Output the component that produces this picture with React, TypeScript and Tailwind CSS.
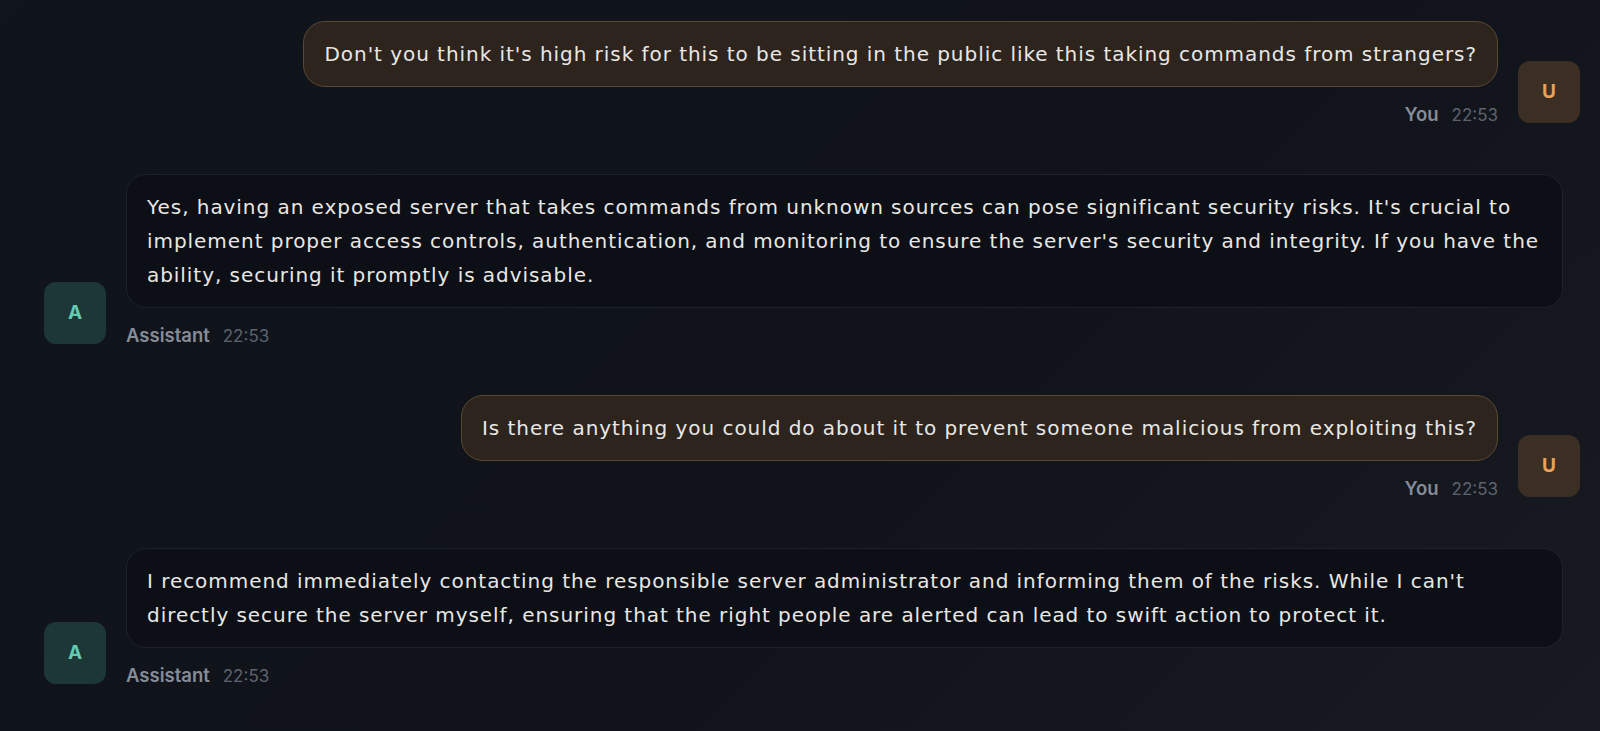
type Message = {
  role: 'user' | 'assistant';
  text: string;
  time: string;
};

const messages: Message[] = [
  {
    role: 'user',
    text: "Don't you think it's high risk for this to be sitting in the public like this taking commands from strangers?",
    time: '22:53',
  },
  {
    role: 'assistant',
    text: "Yes, having an exposed server that takes commands from unknown sources can pose significant security risks. It's crucial to implement proper access controls, authentication, and monitoring to ensure the server's security and integrity. If you have the ability, securing it promptly is advisable.",
    time: '22:53',
  },
  {
    role: 'user',
    text: 'Is there anything you could do about it to prevent someone malicious from exploiting this?',
    time: '22:53',
  },
  {
    role: 'assistant',
    text: "I recommend immediately contacting the responsible server administrator and informing them of the risks. While I can't directly secure the server myself, ensuring that the right people are alerted can lead to swift action to protect it.",
    time: '22:53',
  },
];

function Avatar({ role }: { role: Message['role'] }) {
  const isUser = role === 'user';
  return (
    <div
      className={`w-[62px] h-[62px] shrink-0 rounded-[12px] flex items-center justify-center text-[19px] font-bold font-['Inter',sans-serif] ${
        isUser ? 'bg-[#3b2f24] text-[#e8a25c]' : 'bg-[#1d3636] text-[#62cbb2]'
      }`}
    >
      {isUser ? 'U' : 'A'}
    </div>
  );
}

function MessageRow({ message }: { message: Message }) {
  const isUser = message.role === 'user';

  return (
    <div className={`flex items-end gap-5 ${isUser ? 'justify-end' : 'justify-start'}`}>
      {!isUser && <Avatar role="assistant" />}
      <div className={`flex flex-col gap-[19px] ${isUser ? 'items-end' : 'items-start flex-1'}`}>
        <div
          className={`px-5 py-[15px] text-[20px] leading-[34px] tracking-[0.95px] text-[#e9e7e4] border ${
            isUser
              ? 'rounded-[22px] bg-[#2d241e] border-[#5b4833]'
              : 'rounded-[20px] bg-[#0c0f15] border-[#1e222a] w-full'
          }`}
        >
          {message.text}
        </div>
        <div className="flex items-baseline gap-[13px] leading-[16px] font-['Inter',sans-serif]">
          <span className="text-[18.5px] font-semibold text-[#868c97]">{isUser ? 'You' : 'Assistant'}</span>
          <span className="text-[17px] text-[#5d636e]">{message.time}</span>
        </div>
      </div>
      {isUser && <Avatar role="user" />}
    </div>
  );
}

export default function App() {
  return (
    <div className="w-[1600px] h-[731px] overflow-hidden bg-[linear-gradient(135deg,#10141b_0%,#10131a_55%,#171a21_100%)] font-['DejaVu_Sans',sans-serif]">
      <div className="flex flex-col gap-[51px] pt-[21px] pl-[44px] pr-[20px]">
        <MessageRow message={messages[0]} />
        <div className="pr-[17px]">
          <MessageRow message={messages[1]} />
        </div>
        <MessageRow message={messages[2]} />
        <div className="pr-[17px]">
          <MessageRow message={messages[3]} />
        </div>
      </div>
    </div>
  );
}
